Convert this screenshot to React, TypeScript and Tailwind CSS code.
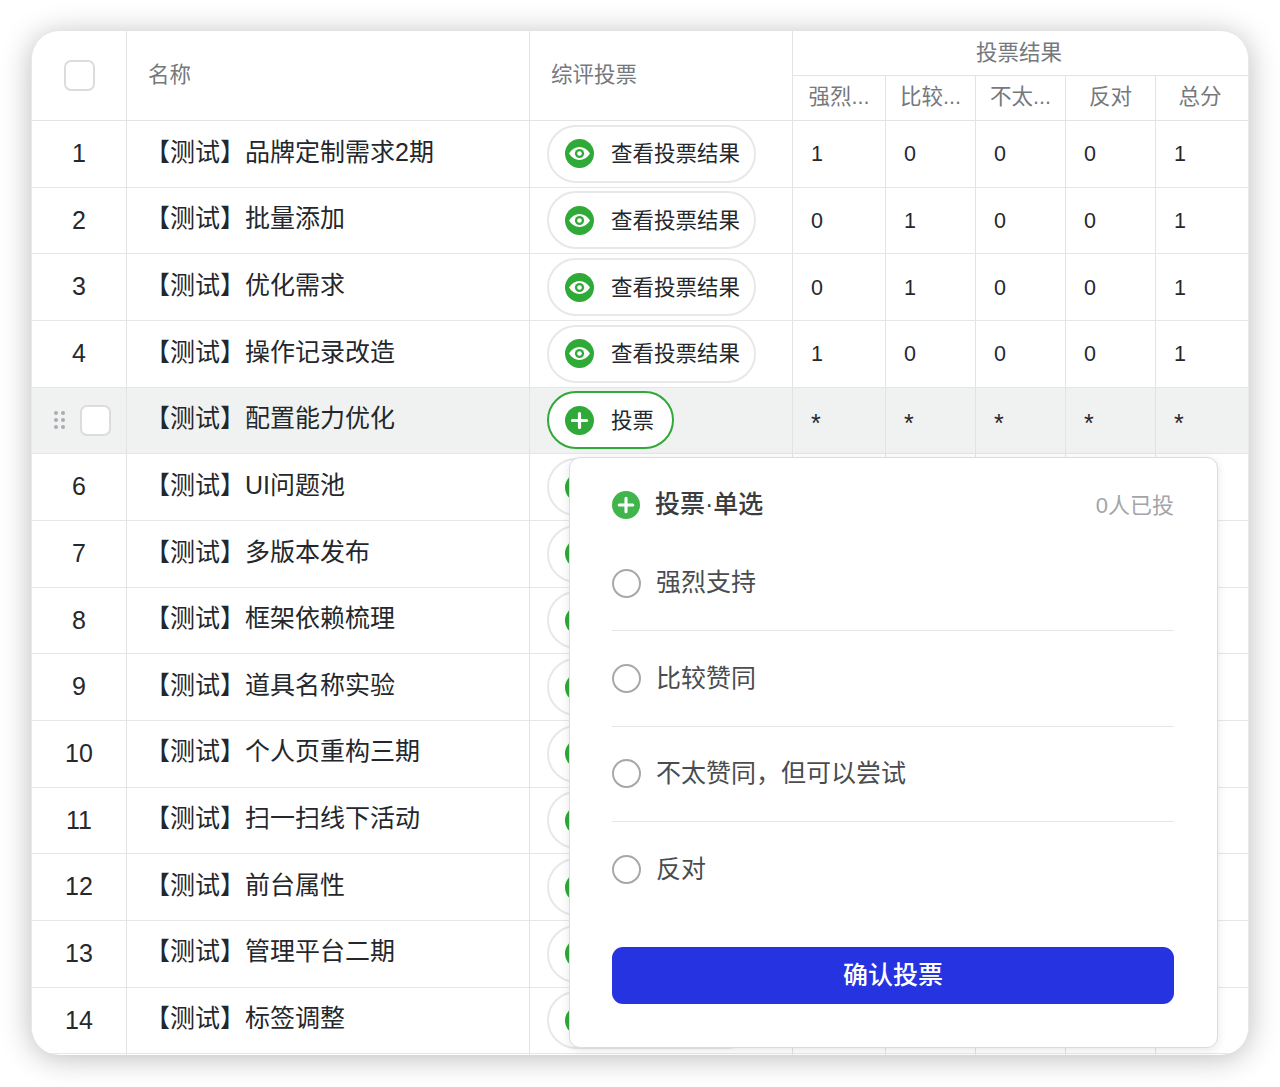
const COLS = "grid grid-cols-[95px_403px_263px_93px_90px_90px_90px_1fr]";

type Row = { name: string; votes?: number[]; active?: boolean };

const rows: Row[] = [
  { name: "【测试】品牌定制需求2期", votes: [1, 0, 0, 0, 1] },
  { name: "【测试】批量添加", votes: [0, 1, 0, 0, 1] },
  { name: "【测试】优化需求", votes: [0, 1, 0, 0, 1] },
  { name: "【测试】操作记录改造", votes: [1, 0, 0, 0, 1] },
  { name: "【测试】配置能力优化", active: true },
  { name: "【测试】UI问题池" },
  { name: "【测试】多版本发布" },
  { name: "【测试】框架依赖梳理" },
  { name: "【测试】道具名称实验" },
  { name: "【测试】个人页重构三期" },
  { name: "【测试】扫一扫线下活动" },
  { name: "【测试】前台属性" },
  { name: "【测试】管理平台二期" },
  { name: "【测试】标签调整" },
];

const options = ["强烈支持", "比较赞同", "不太赞同，但可以尝试", "反对"];

function EyeIcon() {
  return (
    <svg width="29" height="29" viewBox="0 0 29 29" className="shrink-0">
      <circle cx="14.5" cy="14.5" r="14.5" fill="#2fa938" />
      <path d="M4 14.5C6.6 10.2 10.2 8 14.5 8S22.4 10.2 25 14.5C22.4 18.8 18.8 21 14.5 21S6.6 18.8 4 14.5Z" fill="#fff" />
      <circle cx="14.5" cy="14.5" r="4.6" fill="#2fa938" />
      <circle cx="14.5" cy="14.5" r="2.3" fill="#fff" />
    </svg>
  );
}

function PlusIcon({ size = 29, color = "#2fa938" }: { size?: number; color?: string }) {
  return (
    <svg width={size} height={size} viewBox="0 0 29 29" className="shrink-0">
      <circle cx="14.5" cy="14.5" r="14.5" fill={color} />
      <path d="M14.5 7.5V21.5M7.5 14.5H21.5" stroke="#fff" strokeWidth="3.2" strokeLinecap="round" />
    </svg>
  );
}

function DragDots() {
  return (
    <svg width="11" height="18" viewBox="0 0 11 18" className="shrink-0">
      {[2, 9, 16].map((y) =>
        [2, 9].map((x) => <circle key={`${x}-${y}`} cx={x} cy={y} r="2" fill="#a9adb1" />)
      )}
    </svg>
  );
}

function Checkbox() {
  return <div className="h-[31px] w-[31px] rounded-[7px] border-2 border-[#dcdcdc] bg-white" />;
}

function ResultRow({ row, index }: { row: Row; index: number }) {
  const line = "border-r border-[#e3e3e3]";
  const value = "flex items-center pl-[18px] pt-[1px] text-[21.5px] text-[#26282c]";
  const star = "flex items-center pl-[18px] pt-[6px] text-[25px] text-[#26282c]";
  // rows below the active one sit under the popover, only the pill's left edge shows
  const votes = row.votes ?? [null, null, null, null, null];
  return (
    <div className={`${COLS} h-[66.67px] border-b-[1.5px] border-[#e6e6e6] ${row.active ? "bg-[#f0f2f1]" : "bg-white"}`}>
      <div className={`flex items-center justify-center ${line} text-[25px] text-[#26282c]`}>
        {row.active ? (
          <div className="ml-[7px] flex items-center gap-[15px]">
            <DragDots />
            <Checkbox />
          </div>
        ) : (
          index + 1
        )}
      </div>
      <div className={`flex items-center ${line} pb-[3px] pl-[18px] text-[25px] text-[#24272c]`}>{row.name}</div>
      <div className={`flex items-center ${line} pl-[17px]`}>
        {row.active ? (
          <div className="flex h-[58px] w-[127px] items-center gap-[17px] rounded-full border-2 border-[#2fa938] bg-white pl-[16px] text-[21.5px] text-[#24272c]">
            <PlusIcon />
            <span className="pt-[1px]">投票</span>
          </div>
        ) : (
          <div className="flex h-[58px] w-[209px] items-center gap-[17px] rounded-full border-2 border-[#e8e8e8] bg-white pl-[16px] text-[21.5px] text-[#24272c]">
            <EyeIcon />
            {row.votes && <span className="pt-[1px]">查看投票结果</span>}
          </div>
        )}
      </div>
      {votes.map((v, i) => (
        <div key={i} className={`${row.active ? star : value} ${i < 4 ? line : ""}`}>
          {row.active ? "*" : v}
        </div>
      ))}
    </div>
  );
}

function VotePopover() {
  return (
    <div className="absolute left-[537px] top-[426px] flex h-[591px] w-[649px] flex-col rounded-[11px] border border-[#dcdcdc] bg-white pl-[42px] pr-[43px] pt-[32px] shadow-[0_2px_10px_rgba(0,0,0,0.1)]">
      <div className="flex h-[30px] items-center justify-between">
        <div className="flex items-center gap-[15px] text-[25px] font-medium text-[#3a3c40]">
          <PlusIcon size={28} color="#40b54b" />
          投票·单选
        </div>
        <div className="text-[22px] text-[#a3a5a8]">0人已投</div>
      </div>
      <div className="mt-[16px]">
        {options.map((o, i) => (
          <div
            key={o}
            className={`flex h-[95.3px] items-center gap-[15px] text-[25px] text-[#4a4c50] ${i < 3 ? "border-b-[1.5px] border-[#e6e6e6]" : ""}`}
          >
            <div className="h-[29px] w-[29px] rounded-full border-2 border-[#a8a8a8]" />
            {o}
          </div>
        ))}
      </div>
      <button className="mt-[30px] h-[57px] w-full rounded-[11px] bg-[#2533e0] text-[25px] font-medium text-white">
        确认投票
      </button>
    </div>
  );
}

export default function App() {
  const head = "flex items-center text-[21.5px] text-[#75787d]";
  const sub = "flex items-center justify-center pb-[2px] text-[21.5px] text-[#75787d]";
  const line = "border-r border-[#e3e3e3]";
  return (
    <div className="h-[1087px] w-[1280px] bg-white pl-[31px] pt-[31px] font-['Liberation_Sans','Noto_Sans_CJK_SC',sans-serif]">
      <div className="relative h-[1024px] w-[1218px] overflow-hidden rounded-[28px] border-x border-[#e8e8e8] bg-white shadow-[0_3px_30px_rgba(0,0,0,0.27)]">
        <div className={`${COLS} h-[90px] border-b-[1.5px] border-[#e3e3e3]`}>
          <div className={`flex items-center justify-center ${line} pb-[1px]`}>
            <Checkbox />
          </div>
          <div className={`${head} ${line} pb-[1px] pl-[21px]`}>名称</div>
          <div className={`${head} ${line} pb-[1px] pl-[21px]`}>综评投票</div>
          <div className="col-span-5 flex flex-col">
            <div className="flex h-[45px] items-center justify-center border-b border-[#e3e3e3] pr-[3px] text-[21.5px] text-[#75787d]">投票结果</div>
            <div className="grid flex-1 grid-cols-[93px_90px_90px_90px_1fr]">
              <div className={`${sub} ${line}`}>强烈...</div>
              <div className={`${sub} ${line}`}>比较...</div>
              <div className={`${sub} ${line}`}>不太...</div>
              <div className={`${sub} ${line}`}>反对</div>
              <div className={`${sub} pr-[4px]`}>总分</div>
            </div>
          </div>
        </div>
        {rows.map((row, i) => (
          <ResultRow key={i} row={row} index={i} />
        ))}
        <div className={`${COLS} h-[10px]`}>
          {[0, 1, 2, 3, 4, 5, 6].map((c) => (
            <div key={c} className={line} />
          ))}
        </div>
        <VotePopover />
      </div>
    </div>
  );
}
